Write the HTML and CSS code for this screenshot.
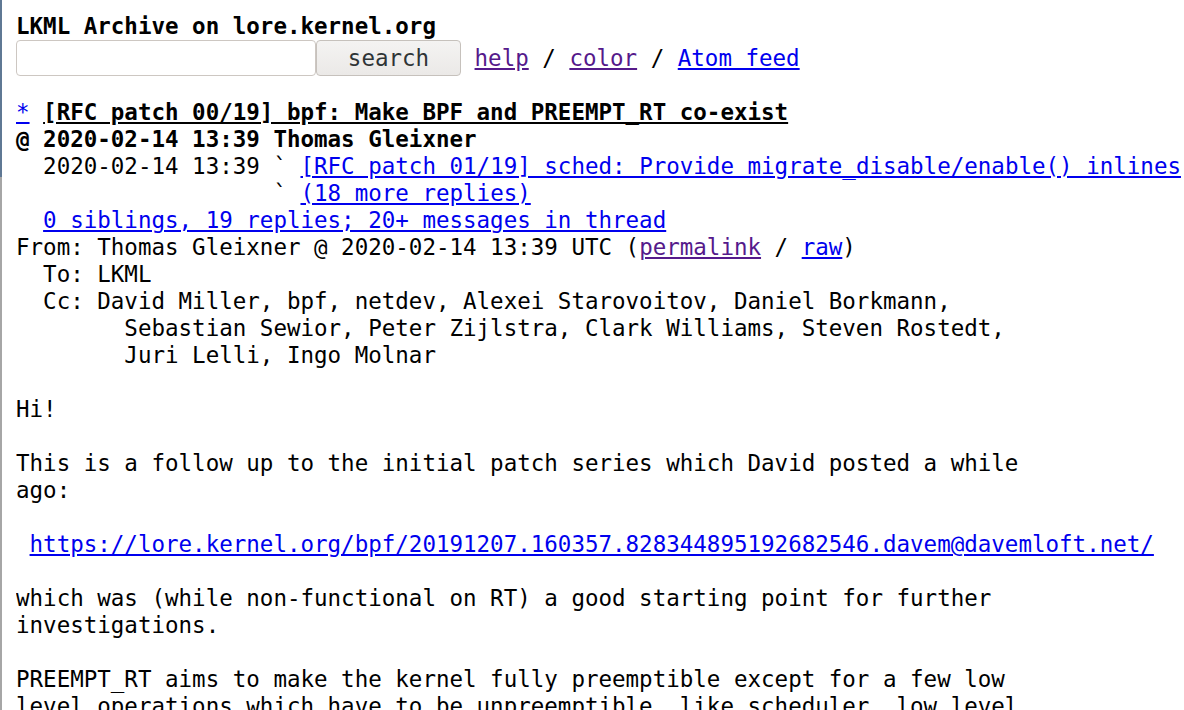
FILE: index.html
```html
<!DOCTYPE html>
<html lang="en">
<head>
    <meta charset="UTF-8">
    <title>[RFC patch 00/19] bpf: Make BPF and PREEMPT_RT co-exist - Thomas Gleixner</title>
    <link rel="stylesheet" href="styles.css">
</head>
<body>
    <form class="top" action="#">
<pre><b>LKML Archive on lore.kernel.org</b>
<input name="q" type="text" class="q"><input type="submit" value="search" class="go"> <a href="#" class="seen">help</a> / <a href="#" class="seen">color</a> / <a href="#">Atom feed</a></pre>
    </form>

<pre class="msg"><a href="#r" class="star">*</a> <a href="#t" class="subj"><b>[RFC patch 00/19] bpf: Make BPF and PREEMPT_RT co-exist</b></a>
<b>@ 2020-02-14 13:39 Thomas Gleixner</b>
  2020-02-14 13:39 ` <a href="#">[RFC patch 01/19] sched: Provide migrate_disable/enable() inlines</a>
                   ` <a href="#">(18 more replies)</a>
  <a href="#">0 siblings, 19 replies; 20+ messages in thread</a>
From: Thomas Gleixner @ 2020-02-14 13:39 UTC (<a href="#" class="seen">permalink</a> / <a href="#">raw</a>)
  To: LKML
  Cc: David Miller, bpf, netdev, Alexei Starovoitov, Daniel Borkmann,
        Sebastian Sewior, Peter Zijlstra, Clark Williams, Steven Rostedt,
        Juri Lelli, Ingo Molnar

Hi!

This is a follow up to the initial patch series which David posted a while
ago:

 <a href="#">https://lore.kernel.org/bpf/20191207.160357.828344895192682546.davem@davemloft.net/</a>

which was (while non-functional on RT) a good starting point for further
investigations.

PREEMPT_RT aims to make the kernel fully preemptible except for a few low
level operations which have to be unpreemptible, like scheduler, low level
entry/exit code, low level interrupt handling, locking internals etc.
</pre>
</body>
</html>
```

FILE: styles.css
```css
html {
    background:
        linear-gradient(#5f7894, #5f7894) 0 0 / 2px 177px no-repeat,
        linear-gradient(#a6a6a6, #a6a6a6) 0 0 / 2px 100% no-repeat,
        #fff;
    overflow: hidden;
}
body {
    margin: 13px 0 0 16px;
    color: #000;
    font-family: "DejaVu Sans Mono", monospace;
    font-size: 22.5px;
}
pre {
    font-family: "DejaVu Sans Mono", monospace;
    font-size: 22.5px;
    line-height: 27px;
    margin: 0;
}
a {
    color: #0000ee;
}
a.seen {
    color: #551a8b;
}
.q {
    box-sizing: border-box;
    width: 300px;
    height: 36px;
    margin: 0 0 2px 0;
    padding: 0 6px;
    border: 1px solid #cdc7c2;
    border-radius: 4px;
    background: #fff;
    vertical-align: middle;
}
.go {
    box-sizing: border-box;
    width: 145px;
    height: 36px;
    margin: 0 0 2px 0;
    padding: 0;
    border: 1px solid #c6c1bc;
    border-radius: 4px;
    background: linear-gradient(#f4f3f2, #ebe9e7);
    color: #2e3436;
    font-family: "DejaVu Sans Mono", monospace;
    font-size: 22.5px;
    vertical-align: middle;
}
.msg {
    margin-top: 21px;
}
.msg .subj {
    color: #000;
}
```
